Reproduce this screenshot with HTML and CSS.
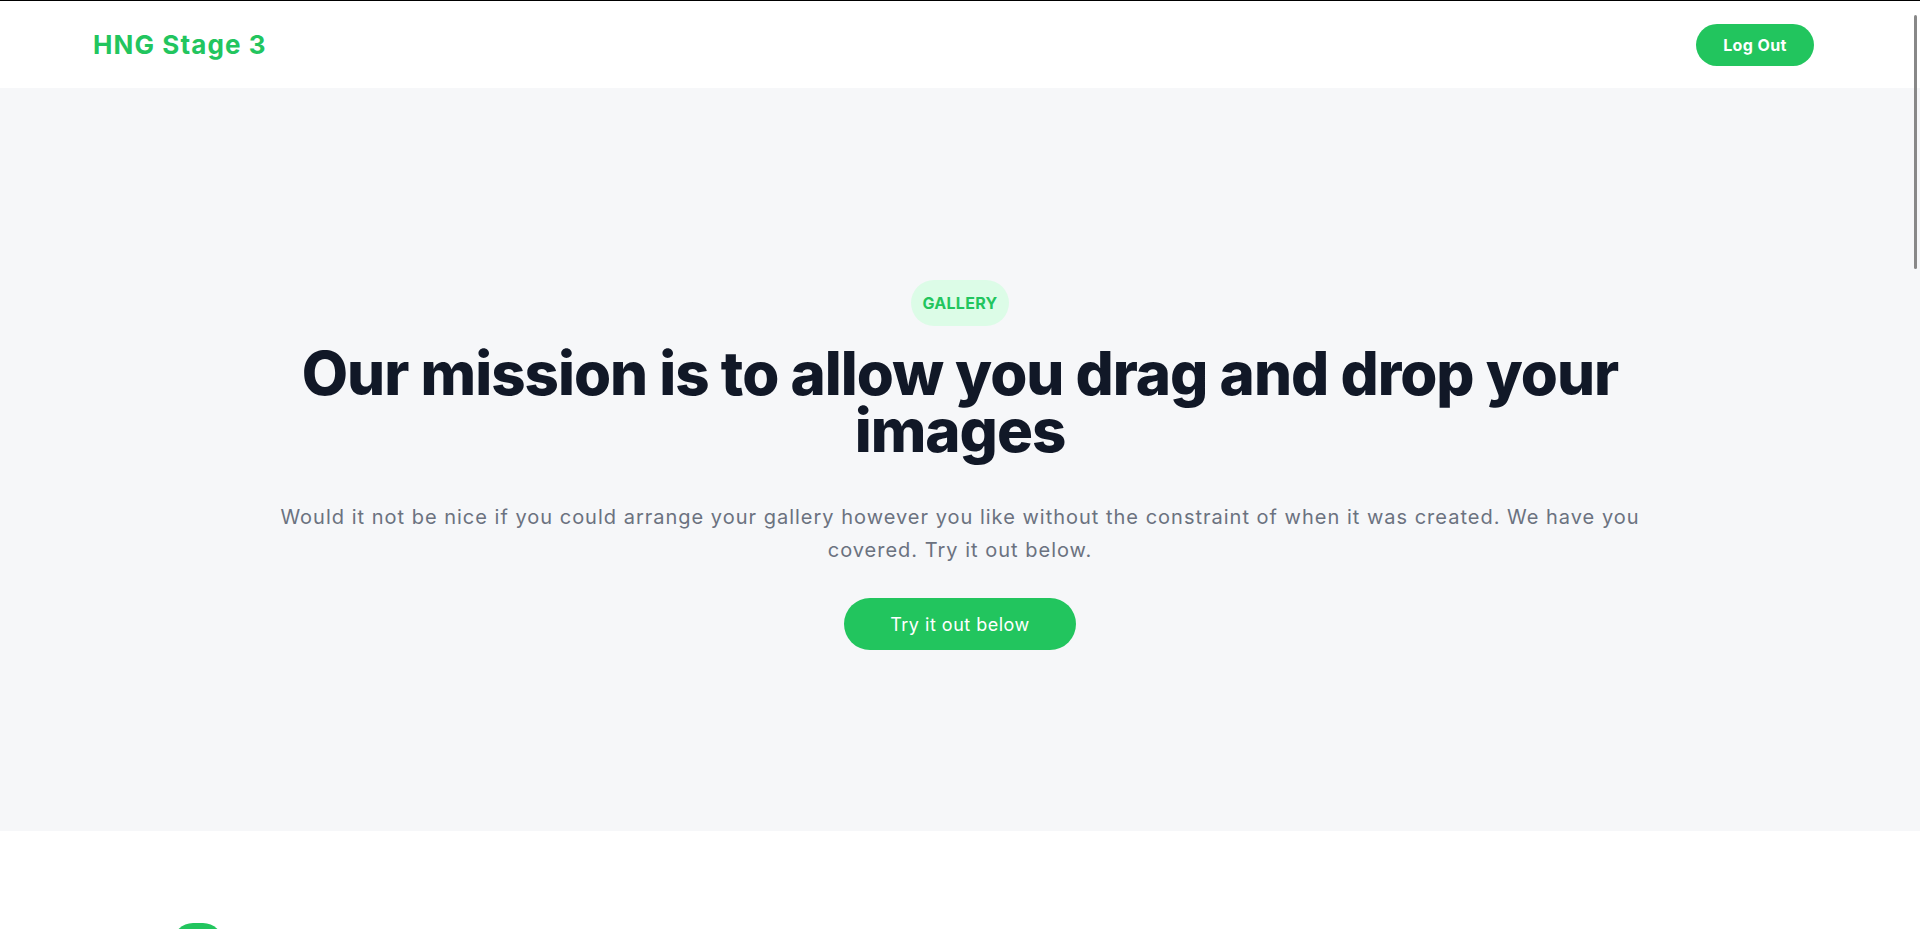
FILE: index.html
```html
<!DOCTYPE html>
<html lang="en">
<head>
<meta charset="utf-8">
<title>HNG Stage 3</title>
<link rel="stylesheet" href="styles.css">
</head>
<body>
<header class="topbar">
  <a class="logo" href="#">HNG Stage 3</a>
  <button class="logout">Log Out</button>
</header>
<main>
  <section class="hero">
    <div class="hero-inner">
      <span class="badge">GALLERY</span>
      <h1 class="hero-title">Our mission is to allow you drag and drop your images</h1>
      <p class="hero-text">Would it not be nice if you could arrange your gallery however you like without the constraint of when it was created. We have you covered. Try it out below.</p>
      <button class="cta">Try it out below</button>
    </div>
  </section>
  <section class="gallery">
    <div class="gallery-head">
      <span class="gallery-pill"></span>
    </div>
  </section>
</main>
<div class="fake-scroll"></div>
</body>
</html>
```
FILE: styles.css
```css
html {
  scrollbar-width: none;
}
html::-webkit-scrollbar {
  display: none;
}
body {
  margin: 0;
  font-family: "Inter", "Open Sans", sans-serif;
  background: #ffffff;
  border-top: 1px solid #000;
  color: #111827;
}
.topbar {
  height: 87px;
  display: flex;
  align-items: center;
  justify-content: space-between;
  padding: 0 106px 0 93px;
  background: #fff;
}
.logo {
  color: #22c55e;
  font-weight: 700;
  font-size: 26px;
  text-decoration: none;
  letter-spacing: 1.1px;
}
.logout {
  width: 118px;
  height: 42px;
  border: none;
  border-radius: 21px;
  background: #22c55e;
  color: #fff;
  font-family: inherit;
  font-weight: 700;
  font-size: 16px;
  letter-spacing: 0.4px;
  cursor: pointer;
}
.hero {
  background: #f6f7f9;
  height: 743px;
  display: flex;
  justify-content: center;
}
.hero-inner {
  width: 1380px;
  display: flex;
  flex-direction: column;
  align-items: center;
  text-align: center;
  padding-top: 192px;
}
.badge {
  display: inline-block;
  background: #dcfce7;
  color: #22c55e;
  font-weight: 700;
  font-size: 16px;
  line-height: 46px;
  height: 46px;
  padding: 0 11px;
  border-radius: 23px;
  letter-spacing: 0.3px;
}
.hero-title {
  margin: 19px 0 0;
  font-size: 60px;
  line-height: 57px;
  font-weight: 800;
  letter-spacing: -1px;
  color: #111827;
}
.hero-text {
  margin: 42px 0 0;
  font-size: 20px;
  line-height: 33px;
  letter-spacing: 1px;
  color: #6b7280;
}
.cta {
  margin-top: 31px;
  width: 232px;
  height: 52px;
  border: none;
  border-radius: 26px;
  background: #22c55e;
  color: #fff;
  font-family: inherit;
  font-size: 18px;
  letter-spacing: 0.5px;
  cursor: pointer;
}
.gallery {
  padding: 92px 0 600px 173px;
}
.gallery-pill {
  display: block;
  width: 50px;
  height: 40px;
  border-radius: 20px;
  background: #22c55e;
}
.fake-scroll {
  position: fixed;
  right: 3px;
  top: 15px;
  width: 3px;
  height: 254px;
  background: #888;
  border-radius: 2px;
}
```
